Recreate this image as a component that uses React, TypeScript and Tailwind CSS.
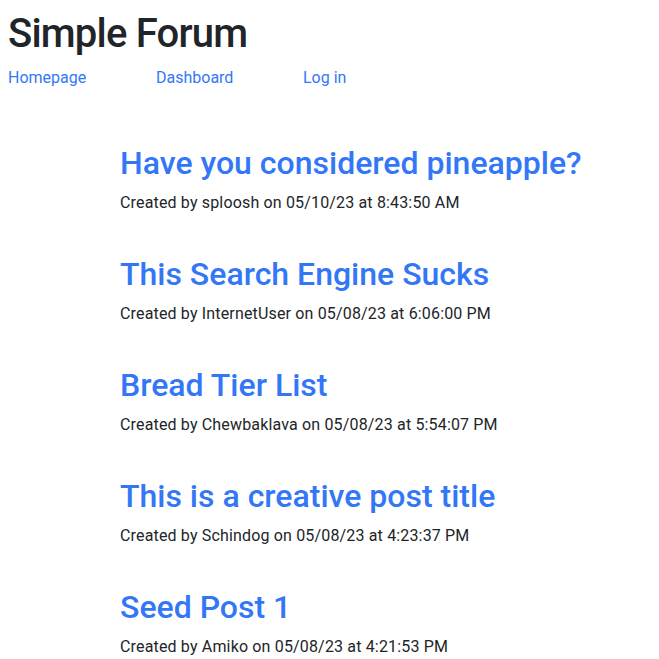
const posts = [
  { title: "Have you considered pineapple?", author: "sploosh", date: "05/10/23", time: "8:43:50 AM" },
  { title: "This Search Engine Sucks", author: "InternetUser", date: "05/08/23", time: "6:06:00 PM" },
  { title: "Bread Tier List", author: "Chewbaklava", date: "05/08/23", time: "5:54:07 PM" },
  { title: "This is a creative post title", author: "Schindog", date: "05/08/23", time: "4:23:37 PM" },
  { title: "Seed Post 1", author: "Amiko", date: "05/08/23", time: "4:21:53 PM" },
];

export default function App() {
  return (
    <div className="min-h-[659px] bg-white px-2 pt-[10px] text-[#212529] font-['Roboto',Arial,sans-serif]">
      <header>
        <h1 className="text-[40px] leading-[1.2] font-medium tracking-[-0.02em]">Simple Forum</h1>
        <nav className="flex mt-[8px]">
          <a href="#" className="w-[148px] text-[#3377f6] text-[16px]">Homepage</a>
          <a href="#" className="w-[147px] text-[#3377f6] text-[16px]">Dashboard</a>
          <a href="#" className="text-[#3377f6] text-[16px]">Log in</a>
        </nav>
      </header>

      <main className="pl-[112px] pt-[54px] flex flex-col gap-[39.5px]">
        {posts.map((p) => (
          <div key={p.title}>
            <a href="#" className="block text-[32px] leading-[1.2] font-medium text-[#3377f6]">
              {p.title}
            </a>
            <p className="mt-[9px] text-[16px] tracking-[0.01em]">
              Created by {p.author} on {p.date} at {p.time}
            </p>
          </div>
        ))}
      </main>
    </div>
  );
}
